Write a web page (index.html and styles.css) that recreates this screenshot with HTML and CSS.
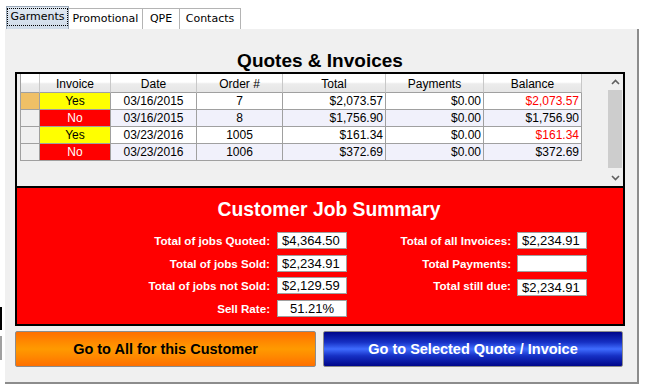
FILE: index.html
```html
<!DOCTYPE html>
<html>
<head>
<meta charset="utf-8">
<link rel="stylesheet" href="styles.css">
</head>
<body>
<div class="edge-marks">
  <span class="mark mark-black"></span>
  <span class="mark mark-grey"></span>
</div>
<div class="window">
  <div class="tabs">
    <div class="tab tab-active tab-garments"><span class="focus">Garments</span></div>
    <div class="tab tab-promo">Promotional</div>
    <div class="tab tab-qpe">QPE</div>
    <div class="tab tab-contacts">Contacts</div>
  </div>
  <div class="panel">
    <h1 class="title">Quotes &amp; Invoices</h1>
    <div class="frame">
      <div class="grid-area">
        <div class="grid">
          <div class="hcell"></div>
          <div class="hcell">Invoice</div>
          <div class="hcell">Date</div>
          <div class="hcell">Order #</div>
          <div class="hcell">Total</div>
          <div class="hcell">Payments</div>
          <div class="hcell">Balance</div>

          <div class="rh rh-current"></div>
          <div class="cell yes">Yes</div>
          <div class="cell c">03/16/2015</div>
          <div class="cell c">7</div>
          <div class="cell r">$2,073.57</div>
          <div class="cell r">$0.00</div>
          <div class="cell r due">$2,073.57</div>

          <div class="rh"></div>
          <div class="cell no">No</div>
          <div class="cell c alt">03/16/2015</div>
          <div class="cell c alt">8</div>
          <div class="cell r alt">$1,756.90</div>
          <div class="cell r alt">$0.00</div>
          <div class="cell r alt">$1,756.90</div>

          <div class="rh"></div>
          <div class="cell yes">Yes</div>
          <div class="cell c">03/23/2016</div>
          <div class="cell c">1005</div>
          <div class="cell r">$161.34</div>
          <div class="cell r">$0.00</div>
          <div class="cell r due">$161.34</div>

          <div class="rh"></div>
          <div class="cell no">No</div>
          <div class="cell c alt">03/23/2016</div>
          <div class="cell c alt">1006</div>
          <div class="cell r alt">$372.69</div>
          <div class="cell r alt">$0.00</div>
          <div class="cell r alt">$372.69</div>
        </div>
        <div class="scrollbar">
          <div class="sb-btn">
            <svg width="9" height="6" viewBox="0 0 9 6"><path d="M1 5 L4.5 1.5 L8 5" fill="none" stroke="#606060" stroke-width="1.6"/></svg>
          </div>
          <div class="sb-thumb"></div>
          <div class="sb-track"></div>
          <div class="sb-btn">
            <svg width="9" height="6" viewBox="0 0 9 6"><path d="M1 1 L4.5 4.5 L8 1" fill="none" stroke="#606060" stroke-width="1.6"/></svg>
          </div>
        </div>
      </div>
      <div class="summary">
        <h2 class="sum-title">Customer Job Summary</h2>
        <div class="sum-grid">
          <div class="lbl">Total of jobs Quoted:</div>
          <div class="val">$4,364.50</div>
          <div class="lbl">Total of all Invoices:</div>
          <div class="val">$2,234.91</div>

          <div class="lbl">Total of jobs Sold:</div>
          <div class="val">$2,234.91</div>
          <div class="lbl">Total Payments:</div>
          <div class="val"></div>

          <div class="lbl">Total of jobs not Sold:</div>
          <div class="val">$2,129.59</div>
          <div class="lbl">Total still due:</div>
          <div class="val val-low">$2,234.91</div>

          <div class="lbl">Sell Rate:</div>
          <div class="val val-center">51.21%</div>
        </div>
      </div>
    </div>
    <div class="buttons">
      <button class="btn btn-orange">Go to All for this Customer</button>
      <button class="btn btn-blue">Go to Selected Quote / Invoice</button>
    </div>
  </div>
</div>
</body>
</html>
```
FILE: styles.css
```css
* { box-sizing: border-box; }

body {
  margin: 0;
  background: #ffffff;
  font-family: "Liberation Sans", Arial, sans-serif;
  color: #000;
  width: 645px;
  height: 389px;
  overflow: hidden;
  position: relative;
}

.edge-marks {
  position: absolute;
  left: 0;
  top: 307px;
  width: 2px;
}
.mark { display: block; width: 2px; }
.mark-black { height: 23px; background: #000; }
.mark-grey { height: 24px; margin-top: 6px; background: #a0a0a0; }

.window { padding-top: 6px; }

/* Tabs */
.tabs {
  display: flex;
  align-items: flex-end;
  height: 23px;
  padding-left: 6px;
  font-family: "DejaVu Sans", sans-serif;
  font-size: 11px;
}
.tab {
  height: 21px;
  border: 1px solid #b4b4b4;
  border-bottom: none;
  border-left: none;
  background: #ffffff;
  display: flex;
  align-items: center;
  justify-content: center;
  padding-bottom: 1px;
}
.tab-active {
  height: 23px;
  border: 1px solid #9aa8b8;
  border-bottom: none;
  background: linear-gradient(#dfe8f2, #cfdbe8);
  padding-bottom: 2px;
}
.focus {
  border: 1px dotted #000;
  padding: 1px 2px 2px 2px;
  line-height: 13px;
}
.tab-garments { width: 63px; }
.tab-promo { width: 74px; }
.tab-qpe { width: 37px; }
.tab-contacts { width: 61px; }

/* Panel */
.panel {
  margin-left: 5px;
  width: 634px;
  height: 355px;
  background: #f0f0f0;
  border-right: 2px solid #8c8c8c;
  border-bottom: 2px solid #8c8c8c;
  padding: 21px 12px 0 10px;
}

.title {
  margin: 0;
  font-size: 19px;
  line-height: 22px;
  font-weight: bold;
  text-align: center;
}

.frame {
  border: 2px solid #000;
  width: 610px;
}

.grid-area {
  display: flex;
  height: 112px;
  background: #f0f0f0;
}

.grid {
  margin-left: 3px;
  display: grid;
  grid-template-columns: 19px 71px 86px 86px 103px 98px 98px;
  grid-template-rows: 19px repeat(4, 17px);
  border-left: 1px solid #a0a0a0;
  align-self: flex-start;
  font-size: 12px;
}

.hcell {
  background: linear-gradient(#ffffff 0%, #ffffff 45%, #ececec 55%, #e6e6e6 100%);
  border-right: 1px solid #c8c8c8;
  border-bottom: 1px solid #a0a0a0;
  display: flex;
  align-items: center;
  justify-content: center;
  padding-top: 1px;
}

.rh {
  background: #f0f0f0;
  border-right: 1px solid #a0a0a0;
  border-bottom: 1px solid #a0a0a0;
}
.rh-current { background: #efc066; }

.cell {
  background: #ffffff;
  border-right: 1px solid #a0a0a0;
  border-bottom: 1px solid #a0a0a0;
  display: flex;
  align-items: center;
  white-space: nowrap;
  line-height: 14px;
}
.cell.c { justify-content: center; }
.cell.r { justify-content: flex-end; padding-right: 2px; }
.cell.alt { background: #f1f1fb; }
.cell.yes { background: #ffff00; justify-content: center; }
.cell.no { background: #ff0000; color: #ffffff; justify-content: center; }
.cell.due { color: #ff0000; }

.scrollbar {
  margin-left: auto;
  width: 16px;
  display: flex;
  flex-direction: column;
  background: #f0f0f0;
}
.sb-btn {
  height: 16px;
  display: flex;
  align-items: center;
  justify-content: center;
}
.sb-thumb {
  height: 78px;
  margin: 0 1px;
  background: #cdcdcd;
}
.sb-track { flex: 1; }

/* Summary */
.summary {
  border-top: 2px solid #000;
  background: #ff0000;
  height: 138px;
  color: #ffffff;
  padding-top: 10px;
}
.sum-title {
  margin: 0;
  font-size: 19.3px;
  line-height: 24px;
  font-weight: bold;
  text-align: center;
  padding-left: 18px;
}
.sum-grid {
  margin-top: 10px;
  display: grid;
  grid-template-columns: 260px 70px 170px 70px;
  grid-auto-rows: 17px;
  row-gap: 5.5px;
}
.lbl {
  text-align: right;
  padding-right: 7px;
  font-weight: bold;
  font-size: 11.6px;
  line-height: 17px;
  white-space: nowrap;
}
.sum-grid .lbl:nth-child(4n+3) { padding-right: 6px; }
.val {
  background: #ffffff;
  border: 1px solid #a0a0a0;
  color: #000;
  font-size: 13px;
  line-height: 15px;
  padding-left: 4px;
  white-space: nowrap;
}
.val-low { transform: translateY(2px); }
.val-center { text-align: center; padding-left: 0; }

/* Buttons */
.buttons {
  margin-top: 5px;
  display: flex;
  gap: 7px;
}
.btn {
  height: 36px;
  border: 1px solid #8c8c8c;
  border-radius: 2px;
  font-family: "Liberation Sans", Arial, sans-serif;
  font-weight: bold;
  font-size: 14.5px;
  padding: 0;
  cursor: pointer;
}
.btn-orange {
  width: 301px;
  color: #000;
  background: linear-gradient(#ff6f00 0%, #ff8a00 30%, #ff9a00 50%, #ff8a00 70%, #ff7000 100%);
}
.btn-blue {
  width: 300px;
  color: #ffffff;
  background: linear-gradient(#00068a 0%, #1630c4 30%, #3f6cff 50%, #1630c4 70%, #00068a 100%);
}
```
